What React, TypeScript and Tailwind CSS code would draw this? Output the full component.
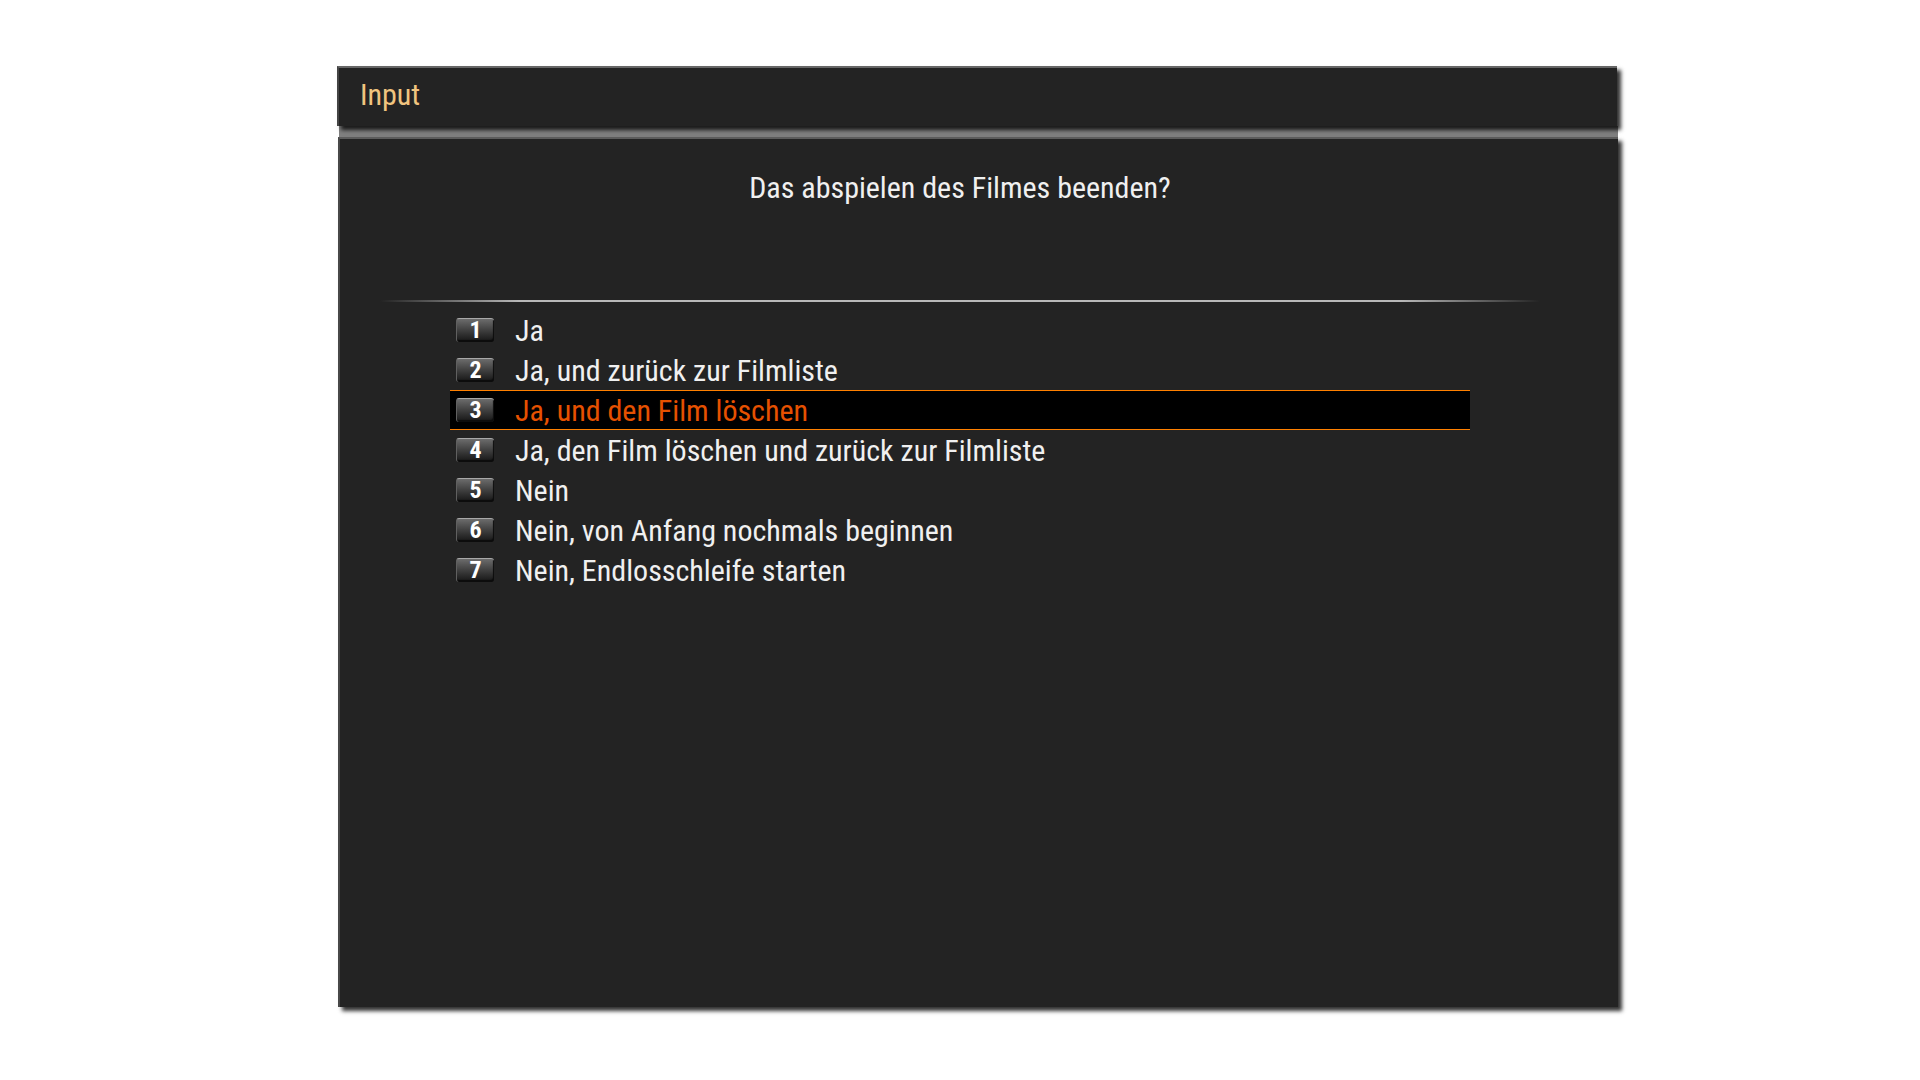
const options = [
  "Ja",
  "Ja, und zurück zur Filmliste",
  "Ja, und den Film löschen",
  "Ja, den Film löschen und zurück zur Filmliste",
  "Nein",
  "Nein, von Anfang nochmals beginnen",
  "Nein, Endlosschleife starten",
];

const selected = 2;

function KeyBadge({ n }: { n: number }) {
  return (
    <span className="flex h-6 w-[38px] shrink-0 justify-center rounded-[3px] border-t border-l border-t-[#a8a8a8] border-l-[#606060] bg-linear-to-b from-[#6c6c6c] to-[#161616] text-2xl leading-[22px] font-bold text-white shadow-[inset_-1px_-2px_1px_#0c0c0c]">
      {n}
    </span>
  );
}

export default function App() {
  return (
    <main className="flex min-h-screen flex-col bg-white pt-[66px] pr-[300px] pb-[73px] pl-[337px] font-['Roboto_Condensed','Roboto',sans-serif] text-[30px] leading-10 text-[#f0f0f0]">
      <section className="flex flex-1 flex-col">
        <header className="relative z-10 mr-[3px] h-[60px] border-t-2 border-l-2 border-t-[#666] border-l-[#444] bg-[#232323] pt-[7px] pl-[21px] shadow-[4px_4px_4px_#000c]">
          <h1 className="text-[#f0c47f]">Input</h1>
        </header>
        <div className="mr-0.5 ml-0.5 h-[11px] bg-[#808080]" />
        <div className="mr-0.5 ml-px flex-1 border-t-2 border-l-2 border-t-[#5c5c5c] border-l-[#484848] bg-[#232323] pr-[78px] pl-10 shadow-[4px_4px_4px_#000c]">
          <p className="pt-[29px] text-center">Das abspielen des Filmes beenden?</p>
          <div className="mt-[92px] h-0.5 bg-[linear-gradient(to_right,transparent,#b8b8b8_12%,#b8b8b8_88%,transparent)]" />
          <ul className="mx-[70px] mt-2">
            {options.map((label, i) => (
              <li key={label}>
                <button
                  type="button"
                  className={
                    i === selected
                      ? "flex h-10 w-full items-center border-y border-[#ff8000] bg-black pl-1.5 text-left text-[#e65100]"
                      : "flex h-10 w-full items-center border-y border-transparent pl-1.5 text-left"
                  }
                >
                  <KeyBadge n={i + 1} />
                  <span className="pt-0.5 pl-[21px]">{label}</span>
                </button>
              </li>
            ))}
          </ul>
        </div>
      </section>
    </main>
  );
}
